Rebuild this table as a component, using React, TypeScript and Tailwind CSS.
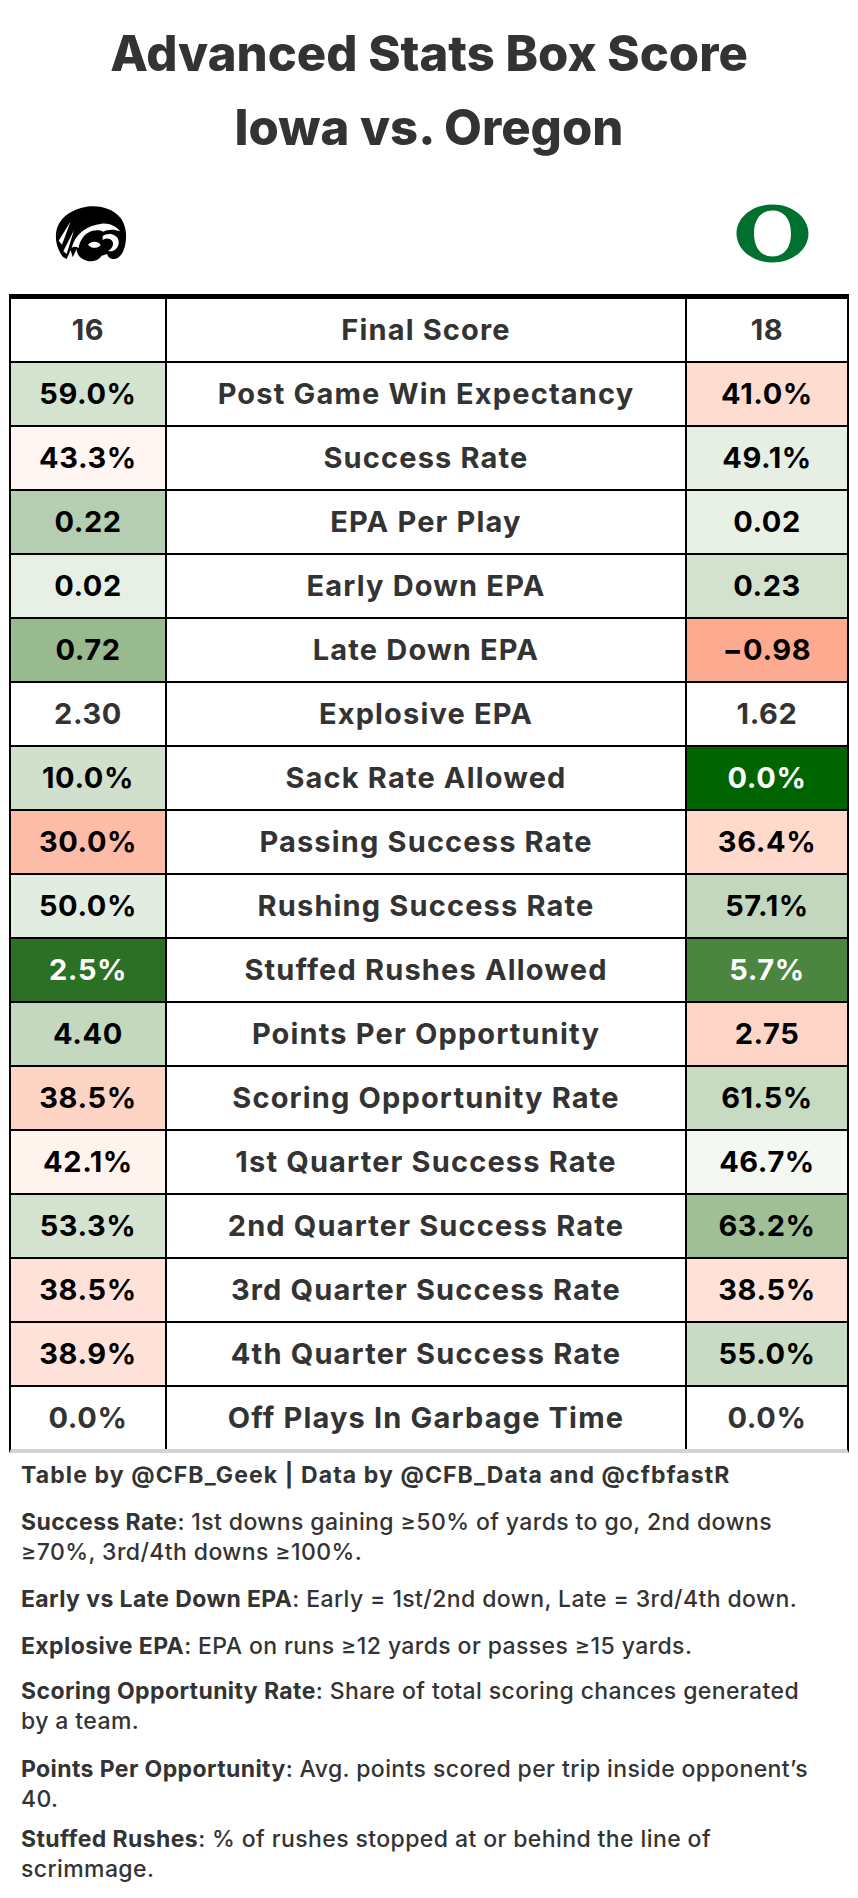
import React from "react"

type Row = {
  label: string
  left: string
  right: string
  lbg: string
  rbg: string
}

const rows: Row[] = [
  { label: "Post Game Win Expectancy", left: "59.0%", right: "41.0%", lbg: "#d4e2d0", rbg: "#fedcd0" },
  { label: "Success Rate", left: "43.3%", right: "49.1%", lbg: "#fff5f2", rbg: "#e7efe4" },
  { label: "EPA Per Play", left: "0.22", right: "0.02", lbg: "#b5cdb0", rbg: "#e9f1e6" },
  { label: "Early Down EPA", left: "0.02", right: "0.23", lbg: "#e8f0e6", rbg: "#d3e1cf" },
  { label: "Late Down EPA", left: "0.72", right: "\u22120.98", lbg: "#99b98f", rbg: "#fcab90" },
  { label: "Explosive EPA", left: "2.30", right: "1.62", lbg: "#ffffff", rbg: "#ffffff" },
  { label: "Sack Rate Allowed", left: "10.0%", right: "0.0%", lbg: "#d1e0cc", rbg: "#006400" },
  { label: "Passing Success Rate", left: "30.0%", right: "36.4%", lbg: "#fdbca7", rbg: "#fed9cc" },
  { label: "Rushing Success Rate", left: "50.0%", right: "57.1%", lbg: "#e3ece0", rbg: "#c3d6be" },
  { label: "Stuffed Rushes Allowed", left: "2.5%", right: "5.7%", lbg: "#2b7024", rbg: "#4b8540" },
  { label: "Points Per Opportunity", left: "4.40", right: "2.75", lbg: "#c4d7bf", rbg: "#fdd5c7" },
  { label: "Scoring Opportunity Rate", left: "38.5%", right: "61.5%", lbg: "#fdd3c4", rbg: "#c7dac2" },
  { label: "1st Quarter Success Rate", left: "42.1%", right: "46.7%", lbg: "#fff3ee", rbg: "#f4f7f2" },
  { label: "2nd Quarter Success Rate", left: "53.3%", right: "63.2%", lbg: "#d4e2d0", rbg: "#a0bf97" },
  { label: "3rd Quarter Success Rate", left: "38.5%", right: "38.5%", lbg: "#fee2d9", rbg: "#fee1d7" },
  { label: "4th Quarter Success Rate", left: "38.9%", right: "55.0%", lbg: "#fee2d9", rbg: "#c9dbc4" },
  { label: "Off Plays In Garbage Time", left: "0.0%", right: "0.0%", lbg: "#ffffff", rbg: "#ffffff" },
]

const notes = [
  { term: "Success Rate", text: "1st downs gaining \u226550% of yards to go, 2nd downs \u226570%, 3rd/4th downs \u2265100%.", gap: "mt-[17px]" },
  { term: "Early vs Late Down EPA", text: "Early = 1st/2nd down, Late = 3rd/4th down.", gap: "mt-[17px]" },
  { term: "Explosive EPA", text: "EPA on runs \u226512 yards or passes \u226515 yards.", gap: "mt-[17px]" },
  { term: "Scoring Opportunity Rate", text: "Share of total scoring chances generated by a team.", gap: "mt-[15px]" },
  { term: "Points Per Opportunity", text: "Avg. points scored per trip inside opponent\u2019s 40.", gap: "mt-[18px]" },
  { term: "Stuffed Rushes", text: "% of rushes stopped at or behind the line of scrimmage.", gap: "mt-[10px]" },
]

// text colour depends on the fill: dark greens get white, white cells get gray
function textColor(bg: string) {
  if (bg === "#ffffff") return "#333333"
  if (bg === "#006400" || bg === "#2b7024" || bg === "#4b8540") return "#ffffff"
  return "#000000"
}

function IowaHawk() {
  return (
    <svg width="80" height="60" viewBox="60 40 240 180">
      <path
        d="M100 200 C80 175 72 140 82 110 C95 75 130 55 170 48 C210 42 250 55 270 80 C288 102 292 135 285 165 C280 188 268 205 250 205 C240 205 232 198 232 190 L215 195 C205 210 185 215 170 210 C150 205 140 190 140 175 L128 200 L122 178 L110 205 Z"
        fill="#000"
      />
      <path d="M86 150 L122 92 L96 162 Z" fill="#fff" />
      <path d="M100 182 L132 118 L110 190 Z" fill="#fff" />
      <path
        d="M125 172 C135 130 170 104 215 99 C240 97 258 107 270 122 C252 115 234 116 220 123 C200 113 172 121 158 141 C151 151 147 161 146 172 C139 167 131 167 125 172 Z"
        fill="#fff"
      />
      <path
        d="M218 136 C234 124 262 130 266 150 C269 171 251 186 234 181 C248 172 253 160 246 150 C239 142 228 142 218 148 Z"
        fill="#fff"
      />
      <path d="M174 162 C184 150 204 150 212 163 C204 173 187 176 174 162 Z" fill="#fff" />
      <circle cx="186" cy="222" r="2" fill="#555" />
    </svg>
  )
}

function OregonO() {
  return (
    <svg width="77" height="61" viewBox="0 0 77 61">
      <path
        fillRule="evenodd"
        d="M38.5 1.5 C58.5 1.5 74.5 14.5 74.5 30.5 C74.5 46.5 58.5 59.5 38.5 59.5 C18.5 59.5 2.5 46.5 2.5 30.5 C2.5 14.5 18.5 1.5 38.5 1.5 Z M38.5 7.5 C29 7.5 20 14 20 30.5 C20 47 29 53.5 38.5 53.5 C48 53.5 57 47 57 30.5 C57 14 48 7.5 38.5 7.5 Z"
        fill="#007030"
      />
    </svg>
  )
}

export default function App() {
  return (
    <div className="w-[858px] bg-white pb-[30px] font-['Inter','Liberation_Sans',sans-serif] text-[#333333]">
      <h1 className="pt-[17px] text-center text-[49px] leading-[74px] font-extrabold">
        <div>Advanced Stats Box Score</div>
        <div>Iowa vs. Oregon</div>
      </h1>

      <div className="mt-[36px] flex h-[65px] items-center justify-between pl-[50px] pr-[47px]">
        <IowaHawk />
        <OregonO />
      </div>

      <div className="mx-[9px] mt-[28px] border-x-2 border-t-[5px] border-b-[4px] border-x-black border-t-black border-b-[#d3d3d3]">
        <div className="flex h-[64px] border-b-2 border-black text-[29px] font-bold tracking-[0.02em]">
          <div className="flex w-[156px] items-center justify-center border-r-2 border-black">16</div>
          <div className="flex w-[520px] items-center justify-center border-r-2 border-black tracking-[0.04em]">
            Final Score
          </div>
          <div className="flex flex-1 items-center justify-center">18</div>
        </div>
        {rows.map((r, i) => (
          <div
            key={r.label}
            className={
              i === rows.length - 1
                ? "flex h-[62px] text-[29px] font-bold tracking-[0.02em]"
                : "flex h-[64px] border-b-2 border-black text-[29px] font-bold tracking-[0.02em]"
            }
          >
            <div
              className="flex w-[156px] items-center justify-center border-r-2 border-black"
              style={{ backgroundColor: r.lbg, color: textColor(r.lbg) }}
            >
              {r.left}
            </div>
            <div className="flex w-[520px] items-center justify-center border-r-2 border-black tracking-[0.04em]">
              {r.label}
            </div>
            <div
              className="flex flex-1 items-center justify-center"
              style={{ backgroundColor: r.rbg, color: textColor(r.rbg) }}
            >
              {r.right}
            </div>
          </div>
        ))}
      </div>

      <div className="pl-[21px] pr-[40px] text-[23px] leading-[30px] font-medium tracking-[0.4px]">
        <p className="mt-[7px] font-bold tracking-[1.1px]">Table by @CFB_Geek | Data by @CFB_Data and @cfbfastR</p>
        {notes.map((n) => (
          <p key={n.term} className={n.gap}>
            <span className="font-bold">{n.term}</span>: {n.text}
          </p>
        ))}
      </div>
    </div>
  )
}
